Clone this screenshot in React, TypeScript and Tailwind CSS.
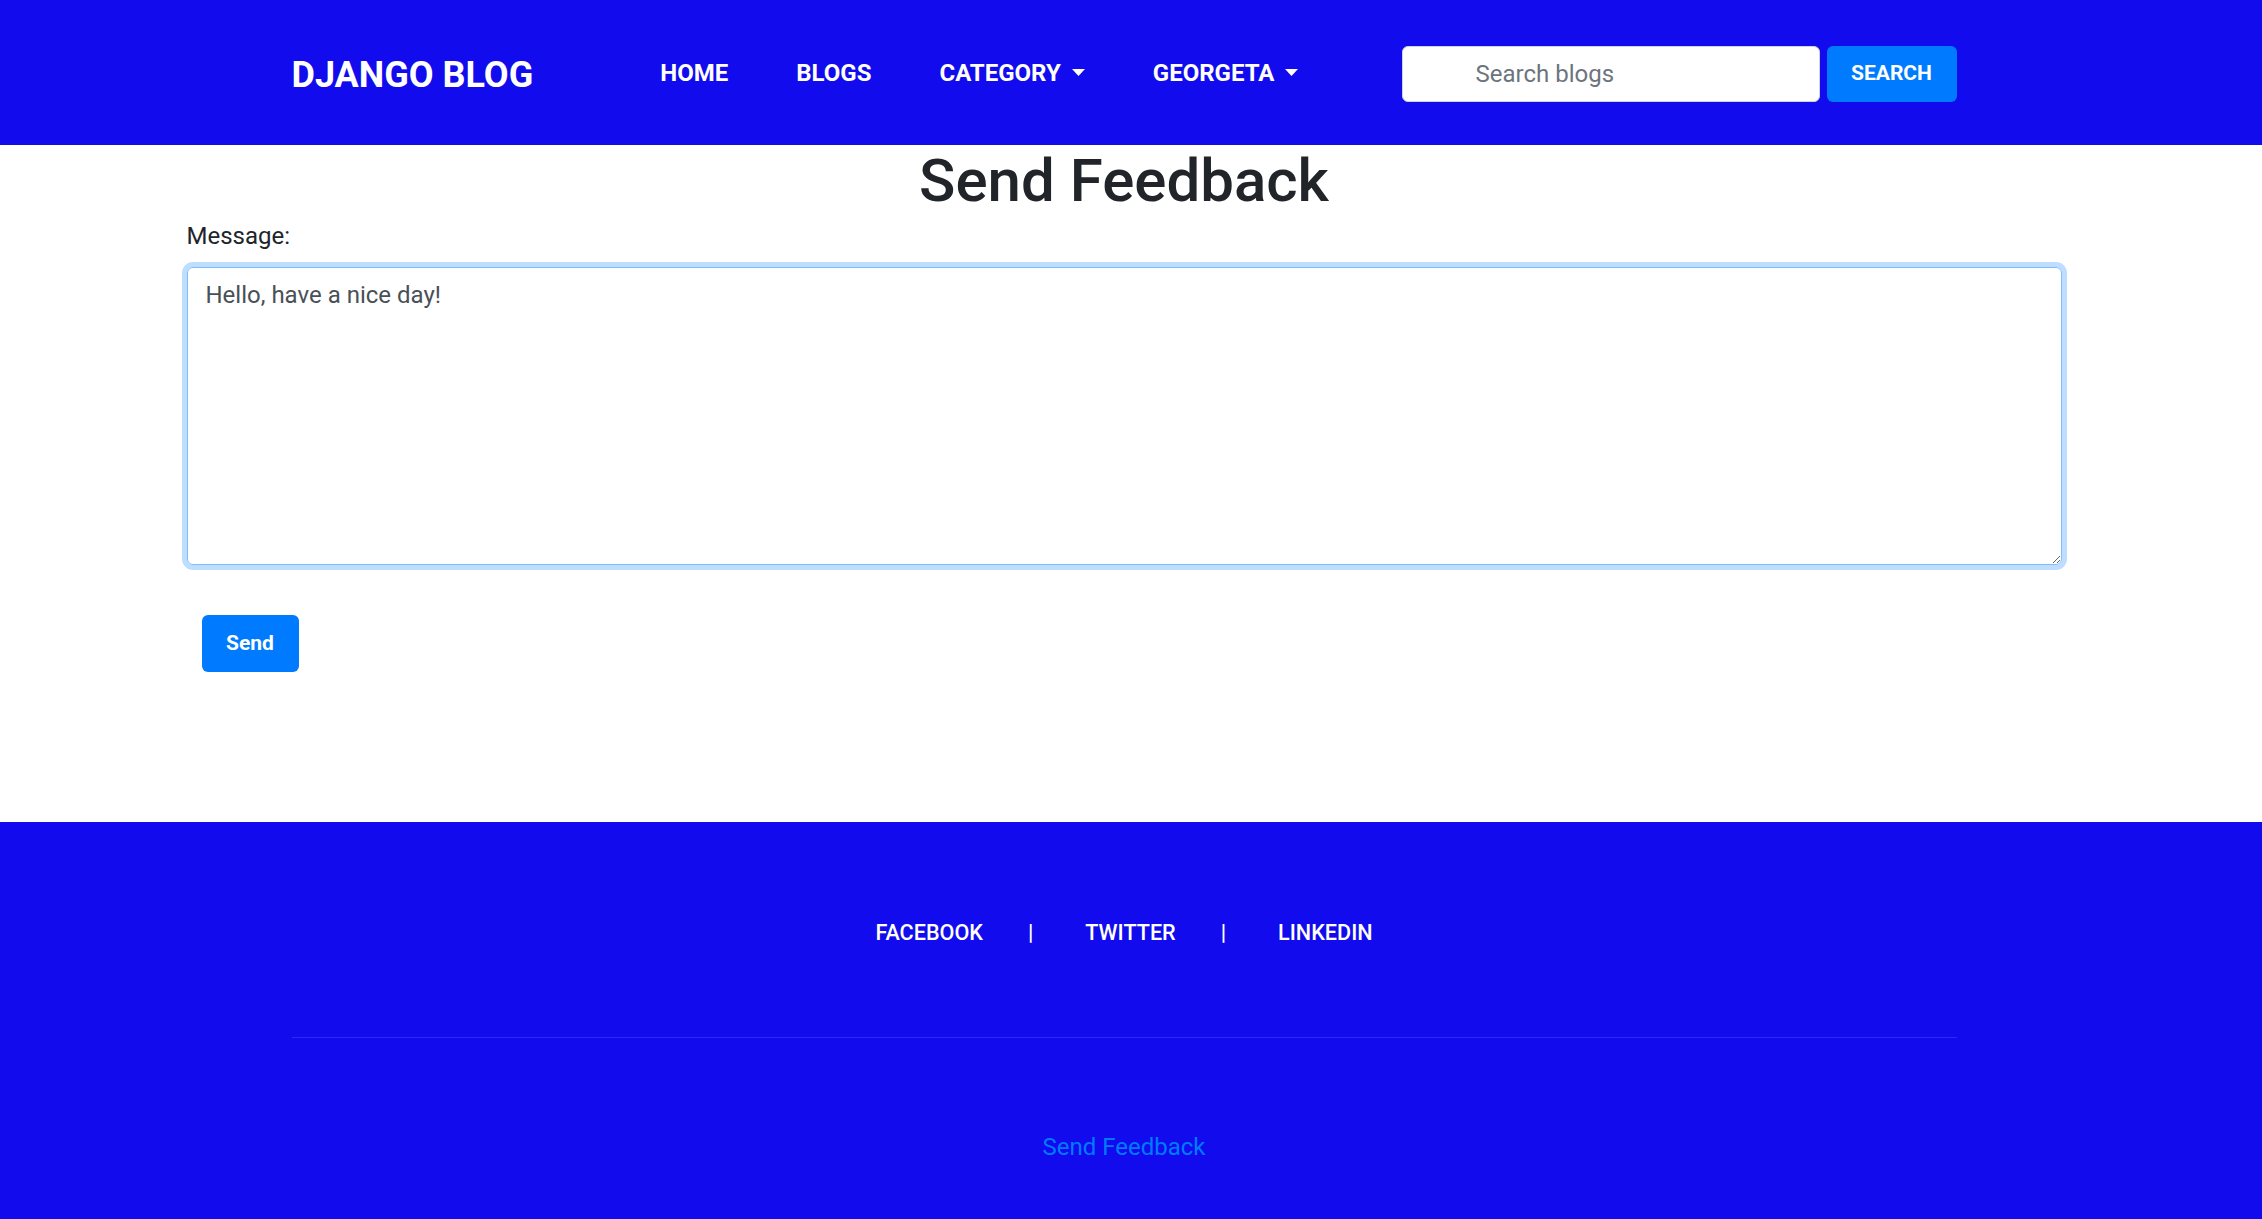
import { useState } from "react";

const navLinks = [
	{ label: "HOME", dropdown: false },
	{ label: "BLOGS", dropdown: false },
	{ label: "CATEGORY", dropdown: true },
	{ label: "GEORGETA", dropdown: true },
];

const socialLinks = ["FACEBOOK", "TWITTER", "LINKEDIN"];

function Caret() {
	return <svg className="ml-[11px] w-[13px] h-[7px]" viewBox="0 0 13 7">
		<path d="M0 0 L13 0 L6.5 7 Z" fill="#ffffff" />
	</svg>
}

function Header() {
	const [query, setQuery] = useState("");

	return <header className="bg-[#110bee] pr-[14px]">
		<div className="mx-auto w-[1665px] h-[145px] flex flex-row items-center">
			<a className="text-[36px] font-bold text-white leading-none mt-[4px]" href="#">DJANGO BLOG</a>
			<ul className="flex flex-row items-center ml-[127px] gap-[68px]">
				{navLinks.map(link => <li key={link.label} className="flex flex-row items-center text-white text-[24px] font-bold">
					<a href="#">{link.label}</a>
					{link.dropdown && <Caret />}
				</li>)}
			</ul>
			<form className="ml-auto mt-[3px] flex flex-row gap-[7px]" onSubmit={e => e.preventDefault()}>
				<input
					className="w-[418px] h-[56px] rounded-[6px] border border-[#ced4da] bg-white pl-[73px] text-[24px] text-[#495057] placeholder:text-[#6c757d] outline-none"
					type="search"
					placeholder="Search blogs"
					value={query}
					onChange={e => setQuery(e.target.value)}
				/>
				<button className="w-[130px] h-[56px] rounded-[6px] bg-[#007bff] text-white text-[21px] font-bold">SEARCH</button>
			</form>
		</div>
	</header>
}

function FeedbackForm() {
	const [message, setMessage] = useState("Hello, have a nice day!");

	return <main className="bg-white pr-[14px] h-[677px]">
		<div className="mx-auto w-[1875px] flex flex-col">
			<h1 className="text-[60px] font-medium leading-[72px] text-[#212529] text-center">Send Feedback</h1>
			<label className="text-[24px] leading-[36px] text-[#212529] mt-[1px] mb-[13px]" htmlFor="message">Message:</label>
			<textarea
				className="h-[298px] rounded-[6px] border-[1.5px] border-[#80bdff] shadow-[0_0_0_5px_rgba(0,123,255,0.25)] px-[18px] py-[9px] text-[24px] leading-[36px] text-[#495057] outline-none"
				name="message"
				value={message}
				onChange={e => setMessage(e.target.value)}
			/>
			<div>
				<button className="mt-[50px] ml-[15px] w-[97px] h-[57px] rounded-[6px] bg-[#007bff] text-white text-[21px] font-bold">Send</button>
			</div>
		</div>
	</main>
}

function Footer() {
	return <footer className="bg-[#110bee] pr-[14px] pb-[80px]">
		<div className="mx-auto w-[1665px] flex flex-col items-center pt-[95px]">
			<div className="flex flex-row items-center h-[32px] text-white text-[21.6px] font-medium">
				{socialLinks.map((link, i) => <div key={link} className="flex flex-row items-center">
					{i > 0 && <span className="ml-[45px] mr-[52px]">|</span>}
					<a href="#">{link}</a>
				</div>)}
			</div>
			<div className="w-full mt-[88px] border-t-[1.5px] border-[#2e2af0]" />
			<a className="mt-[91px] text-[24px] leading-[36px] text-[#007bff]" href="#">Send Feedback</a>
		</div>
	</footer>
}

export default function App() {
	return <div className="min-h-screen bg-[#110bee] font-['Roboto','Liberation_Sans',sans-serif]">
		<Header />
		<FeedbackForm />
		<Footer />
	</div>
}
